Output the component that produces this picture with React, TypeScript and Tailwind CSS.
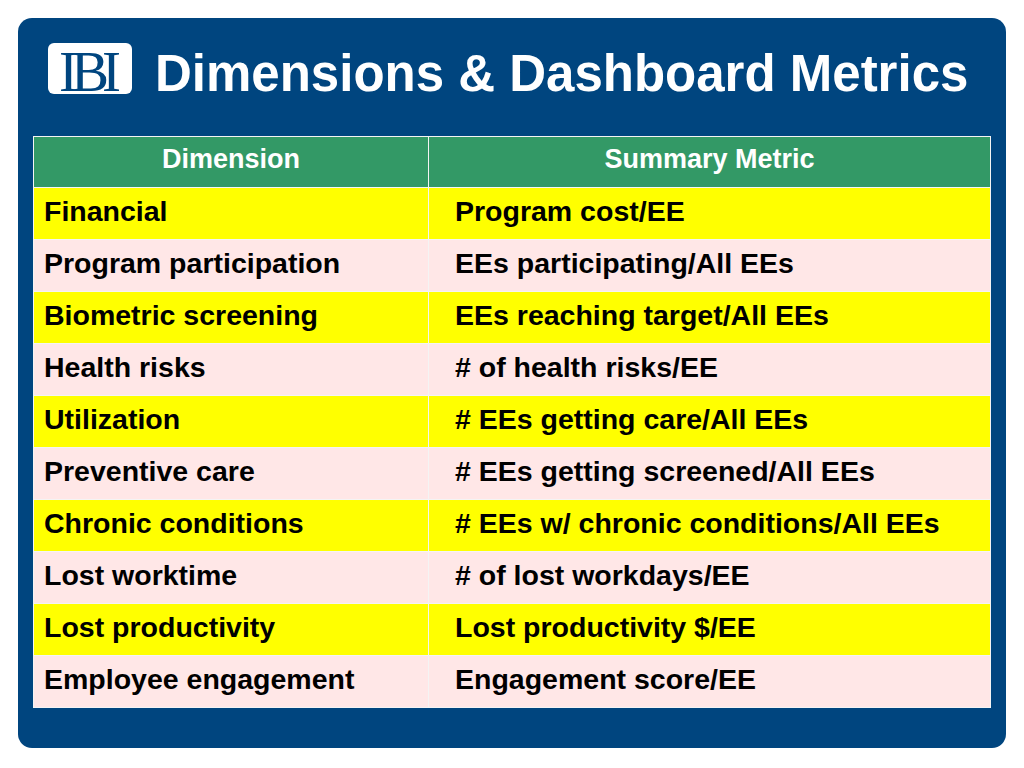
const rows: [string, string][] = [
  ['Financial', 'Program cost/EE'],
  ['Program participation', 'EEs participating/All EEs'],
  ['Biometric screening', 'EEs reaching target/All EEs'],
  ['Health risks', '# of health risks/EE'],
  ['Utilization', '# EEs getting care/All EEs'],
  ['Preventive care', '# EEs getting screened/All EEs'],
  ['Chronic conditions', '# EEs w/ chronic conditions/All EEs'],
  ['Lost worktime', '# of lost workdays/EE'],
  ['Lost productivity', 'Lost productivity $/EE'],
  ['Employee engagement', 'Engagement score/EE'],
];

const sans = { fontFamily: '"Liberation Sans", Arial, sans-serif' };

export default function App() {
  return (
    <div className="w-[1024px] h-[768px] bg-white p-[18px]" style={sans}>
      <div className="w-[988px] h-[730px] bg-[#00457f] rounded-[14px] flex flex-col">
        {/* title bar */}
        <div className="h-[118px] flex items-start pt-[25px] pl-[30px]">
          <div className="w-[84px] h-[51px] bg-white rounded-[6px] flex items-center justify-center">
            <span
              className="text-[#00457f] text-[57px] leading-none tracking-[-7px] pr-[7px] mt-[5px]"
              style={{ fontFamily: '"Liberation Serif", "Times New Roman", serif' }}
            >
              IBI
            </span>
          </div>
          <h1 className="ml-[23px] mt-[2px] text-white font-bold text-[51px] leading-[57px]">
            Dimensions &amp; Dashboard Metrics
          </h1>
        </div>

        {/* table */}
        <div className="mx-[15px] grid grid-cols-[394px_1fr] gap-px bg-[#f4f4f4] p-px">
          <div className="h-[50px] bg-[#339966] text-white font-bold text-[27px] flex items-center justify-center pb-[6px]">
            Dimension
          </div>
          <div className="h-[50px] bg-[#339966] text-white font-bold text-[27px] flex items-center justify-center pb-[6px]">
            Summary Metric
          </div>
          {rows.map(([dim, metric], i) => {
            const bg = i % 2 === 0 ? 'bg-[#ffff00]' : 'bg-[#ffe7e7]';
            return [
              <div
                key={`d${i}`}
                className={`h-[51px] ${bg} text-black font-bold text-[28.5px] flex items-center pl-[10px] pb-[5px]`}
              >
                {dim}
              </div>,
              <div
                key={`m${i}`}
                className={`h-[51px] ${bg} text-black font-bold text-[28.5px] flex items-center pl-[26px] pb-[5px]`}
              >
                {metric}
              </div>,
            ];
          })}
        </div>
      </div>
    </div>
  );
}
